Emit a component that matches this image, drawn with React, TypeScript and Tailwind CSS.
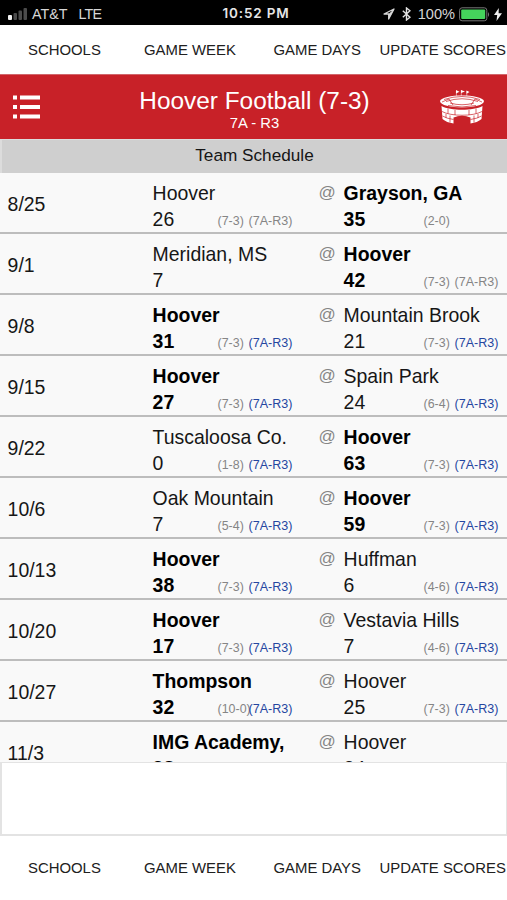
import React from 'react';

interface Side {
  name: string;
  score: string;
  record: string;
  region?: string;
}

interface Game {
  date: string;
  away: Side;
  home: Side;
  winner: 'away' | 'home';
  regionGame: boolean;
}

const REGION = '(7A-R3)';

const GAMES: Game[] = [
  { date: '8/25', away: { name: 'Hoover', score: '26', record: '(7-3)', region: REGION }, home: { name: 'Grayson, GA', score: '35', record: '(2-0)' }, winner: 'home', regionGame: false },
  { date: '9/1', away: { name: 'Meridian, MS', score: '7', record: '' }, home: { name: 'Hoover', score: '42', record: '(7-3)', region: REGION }, winner: 'home', regionGame: false },
  { date: '9/8', away: { name: 'Hoover', score: '31', record: '(7-3)', region: REGION }, home: { name: 'Mountain Brook', score: '21', record: '(7-3)', region: REGION }, winner: 'away', regionGame: true },
  { date: '9/15', away: { name: 'Hoover', score: '27', record: '(7-3)', region: REGION }, home: { name: 'Spain Park', score: '24', record: '(6-4)', region: REGION }, winner: 'away', regionGame: true },
  { date: '9/22', away: { name: 'Tuscaloosa Co.', score: '0', record: '(1-8)', region: REGION }, home: { name: 'Hoover', score: '63', record: '(7-3)', region: REGION }, winner: 'home', regionGame: true },
  { date: '10/6', away: { name: 'Oak Mountain', score: '7', record: '(5-4)', region: REGION }, home: { name: 'Hoover', score: '59', record: '(7-3)', region: REGION }, winner: 'home', regionGame: true },
  { date: '10/13', away: { name: 'Hoover', score: '38', record: '(7-3)', region: REGION }, home: { name: 'Huffman', score: '6', record: '(4-6)', region: REGION }, winner: 'away', regionGame: true },
  { date: '10/20', away: { name: 'Hoover', score: '17', record: '(7-3)', region: REGION }, home: { name: 'Vestavia Hills', score: '7', record: '(4-6)', region: REGION }, winner: 'away', regionGame: true },
  { date: '10/27', away: { name: 'Thompson', score: '32', record: '(10-0)', region: REGION }, home: { name: 'Hoover', score: '25', record: '(7-3)', region: REGION }, winner: 'away', regionGame: true },
  { date: '11/3', away: { name: 'IMG Academy,', score: '38', record: '' }, home: { name: 'Hoover', score: '24', record: '' }, winner: 'away', regionGame: false },
];

const StatusBar: React.FC = () => (
  <div className="grid h-[25px] shrink-0 grid-cols-3 items-center bg-black pt-[3px] text-[14px] leading-none text-[#d6d6d6]">
    <div className="flex items-center pl-2">
      <svg width="20" height="13" viewBox="0 0 20 13" className="mr-1">
        <rect x="0" y="8" width="4" height="5" rx="1" fill="#f2f2f2" />
        <rect x="5.5" y="6" width="3.5" height="7" rx="1" fill="#4b4b4b" />
        <rect x="10.5" y="3.5" width="3.5" height="9.5" rx="1" fill="#4b4b4b" />
        <rect x="15.5" y="1" width="3.5" height="12" rx="1" fill="#4b4b4b" />
      </svg>
      <span className="text-[14.3px]">AT&amp;T</span>
      <span className="ml-[11px] text-[14.3px] tracking-[-0.8px]">LTE</span>
    </div>
    <div className="pl-[5px] text-center font-['Inter'] text-[13.5px] font-semibold tracking-[0.8px] text-[#e6e6e6]">10:52 PM</div>
    <div className="flex items-center justify-end pr-[5px]">
      <svg width="12" height="12" viewBox="0 0 12 12" className="mr-[7px]">
        <path d="M11 1 1 6h4.7v5z" fill="none" stroke="#d8d8d8" strokeWidth="1.3" strokeLinejoin="round" />
        <path d="M11 1 5.7 6v5z" fill="#d8d8d8" />
      </svg>
      <svg width="9" height="14" viewBox="0 0 9 14" className="mr-[7px]">
        <path d="M.8 3.8 8 10.2 4.5 13V1L8 3.8.8 10.2" fill="none" stroke="#e2e2e2" strokeWidth="1.4" />
      </svg>
      <span className="text-[14.6px]">100%</span>
      <svg width="32" height="15" viewBox="0 0 32 15" className="ml-[4px]">
        <rect x=".6" y=".8" width="27.2" height="13" rx="2.5" fill="none" stroke="#777" strokeWidth="1" />
        <rect x="2.2" y="2.5" width="24" height="9.6" rx="1" fill="#45d35c" />
        <path d="M29 5v5q2.2-2.5 0-5" fill="#777" />
      </svg>
      <svg width="8" height="13" viewBox="0 0 8 13" className="ml-[3px]">
        <path d="M4.8 0 0 7h3.2L2.5 13 8 5.3H4.6z" fill="#eee" />
      </svg>
    </div>
  </div>
);

const NavTabs: React.FC = () => (
  <nav className="flex h-[49px] shrink-0 items-center bg-white pl-7 pt-px text-[14.9px] whitespace-nowrap text-[#202020]">
    <span className="w-[116px]">SCHOOLS</span>
    <span className="w-[129.5px]">GAME WEEK</span>
    <span className="w-[106px]">GAME DAYS</span>
    <span>UPDATE SCORES</span>
  </nav>
);

// Stadium bowl with flags, lower arcade and gate
const StadiumIcon: React.FC = () => (
  <svg width="46" height="34" viewBox="0 0 46 34" fill="#fff">
    <path d="M17 0l3.5 1.8L17 3.5zM22 0l4 1.5L22 3zM27.5.5l3 1.5-3 1.7z" />
    <path d="M17.4 1v5M22.3 0v6M27.8 1v5" stroke="#fff" strokeWidth=".5" />
    <path d="M1 11C3 3.500 43 3.500 45 11c0 8.500-44 8.500-44 0z" />
    <path d="M5 9.500Q23 3.500 41 9.500M7 11.500Q23 6 39 11.500M3 12l7-3 4 6M43 12l-7-3-4 6M11 13q12 3.500 24 0M9 15.500q14 3 28 0" fill="none" stroke="#c82128" strokeWidth=".7" />
    <path d="M2.500 16c9 5 32 5 41 0L42.500 29q-4 3.500-11 4.500v-6q-8.500-3.500-17 0v6Q7.500 32.500 3.500 29z" />
    <path d="M3 21.500c9 5 31 5 40 0M3.500 26q4 2.500 11 3.500M42.500 26q-4 2.500-11 3.500M9 18.500v5M16 20v5M30 20v5M37 18.500v5M7 24v4M11 25.500v7M35 25.500v7M39 24v4" fill="none" stroke="#c82128" strokeWidth=".7" />
    <path d="M16 34v-6.500q7-2.500 14 0V34z" fill="#c82128" />
  </svg>
);

const TeamHeader: React.FC = () => (
  <header className="grid h-[65px] shrink-0 grid-cols-[46px_1fr_46px] items-center border-t border-[#d1666b] bg-[#c82128] pl-[13px] pr-[22px] text-white">
    <svg width="27" height="24" viewBox="0 0 27 24" fill="#fff">
      <path d="M0 .5h4v4H0zM7 .5h20v4H7zM0 10h4v4H0zM7 10h20v4H7zM0 19.500h4v4H0zM7 19.500h20v4H7z" />
    </svg>
    <div className="pl-[11px] pt-[5px] text-center">
      <h1 className="text-[24.4px] leading-[26px]">Hoover Football (7-3)</h1>
      <p className="pt-px text-[14.8px] leading-[17px]">7A - R3</p>
    </div>
    <StadiumIcon />
  </header>
);

interface TeamSideProps {
  side: Side;
  won: boolean;
  regionGame: boolean;
}

const TeamSide: React.FC<TeamSideProps> = ({ side, won, regionGame }) => (
  <div className={won ? 'font-bold text-black' : 'text-[#161616]'}>
    <div className="leading-[26px] whitespace-nowrap">{side.name}</div>
    <div className="grid h-[26px] grid-cols-[1fr_31px_59px] leading-[26px]">
      <span>{side.score}</span>
      <span className="pt-0.5 text-[12.4px] font-normal whitespace-nowrap text-[#858585]">{side.record}</span>
      <span className={`pt-0.5 text-[12.5px] font-normal whitespace-nowrap ${regionGame ? 'text-[#2546a0]' : 'text-[#858585]'}`}>
        {side.region}
      </span>
    </div>
  </div>
);

const GameRow: React.FC<{ game: Game }> = ({ game }) => (
  <div className="grid h-[61.05px] grid-cols-[145px_155px_11px_25px_170px] border-b-2 border-[#bdbdbd] bg-[#f9f9f9] pl-[7.6px] pt-[7px] text-[19.45px]">
    <div className="pt-[11px] leading-[26px] text-[#161616]">{game.date}</div>
    <TeamSide side={game.away} won={game.winner === 'away'} regionGame={game.regionGame} />
    <div className="col-start-4 text-[17px] leading-[26px] text-[#858585]">@</div>
    <TeamSide side={game.home} won={game.winner === 'home'} regionGame={game.regionGame} />
  </div>
);

const App: React.FC = () => {
  return (
    <div className="flex h-[900px] w-[507px] flex-col overflow-hidden bg-white font-['Liberation_Sans',Arial,sans-serif]">
      <StatusBar />
      <NavTabs />
      <TeamHeader />

      <div className="h-[34px] shrink-0 border-l-2 border-t border-[#dcdcdc] bg-[#cfcfcf] text-center text-[17.2px] leading-[31px] text-[#161616]">
        Team Schedule
      </div>

      {/* Schedule list, last row is cut by the ad slot */}
      <div className="h-[589px] shrink-0 overflow-hidden">
        {GAMES.map(game => (
          <GameRow key={game.date} game={game} />
        ))}
      </div>

      {/* Empty ad slot */}
      <div className="h-[74px] shrink-0 border-2 border-t border-r border-[#e3e3e3] bg-white" />

      <div className="pt-[7px]">
        <NavTabs />
      </div>
    </div>
  );
};

export default App;
